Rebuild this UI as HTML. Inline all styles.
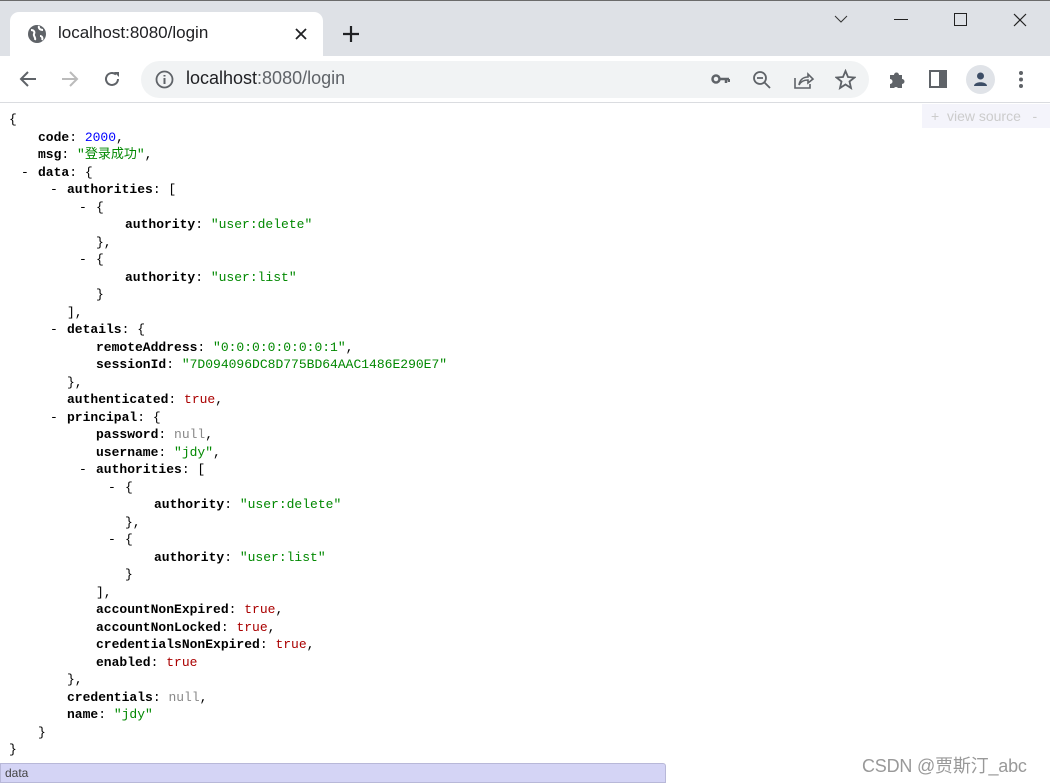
<!DOCTYPE html>
<html><head><meta charset="utf-8"><style>
*{margin:0;padding:0;box-sizing:border-box}
body{width:1050px;height:783px;overflow:hidden;background:#fff;font-family:"Liberation Sans","Noto Sans CJK SC",sans-serif;position:relative}
.top{position:absolute;left:0;top:0;width:1050px;height:56px;background:#dee1e6;border-top:1px solid #6b6b6b}
.tab{position:absolute;left:10px;top:12px;width:313px;height:45px;background:#fff;border-radius:9px 9px 0 0}
.tab .t{position:absolute;left:48px;top:11px;font-size:17px;color:#202124}
.tb{position:absolute;left:0;top:56px;width:1050px;height:47px;background:#fff;border-bottom:1px solid #dadce0}
.omni{position:absolute;left:141px;top:61px;width:728px;height:37px;background:#f1f3f4;border-radius:19px}
.omni .u{position:absolute;left:45px;top:7px;font-size:18px;color:#202124}
.omni .u span{color:#5f6368}
.ic{position:absolute}
.json{position:absolute;left:0;top:111px;width:900px;font-family:"Liberation Mono","Noto Sans CJK SC",monospace;font-size:13px;line-height:17.5px;color:#000}
.json div{height:17.5px;position:relative;white-space:nowrap}
.json i{font-style:normal;position:absolute;margin-left:-17px}
b{font-weight:bold;color:#000}
.n{color:#00f}.s{color:#080}.k{color:#a00}.z{color:#888}
.vs{position:absolute;left:922px;top:104px;width:128px;height:24px;background:#f4f4fb;color:#ccc;font-size:14px;padding:4px 0 0 9px}
.sb{position:absolute;left:0;top:763px;width:666px;height:20px;background:#d4d4f5;border:1px solid #b8b8d8;border-radius:0 3px 0 0;font-size:12px;color:#444;padding:2px 4px}
.wm{position:absolute;left:862px;top:752px;font-size:18px;color:#999;letter-spacing:-0.2px}
</style></head><body>
<div class="top"></div>
<div class="tab">
<svg class="ic" style="left:17px;top:12px" width="20" height="20" viewBox="0 0 20 20"><circle cx="10" cy="10" r="9" fill="#5f6368"/><path d="M4 6c3 0 4 2 3 4s2 3 1 6M12 2c-1 3 2 4 4 4M13 12c2 0 3 2 2 4" stroke="#fff" stroke-width="2" fill="none"/></svg>
<div class="t">localhost:8080/login</div>
<svg class="ic" style="left:285px;top:16px" width="12" height="12"><path d="M1 1L11 11M11 1L1 11" stroke="#202124" stroke-width="1.8"/></svg>
</div>
<svg class="ic" style="left:342px;top:25px" width="18" height="18"><path d="M9 1V17M1 9H17" stroke="#202124" stroke-width="2.2"/></svg>
<svg class="ic" style="left:834px;top:14px" width="14" height="10"><path d="M1 2L7 8L13 2" stroke="#333" fill="none"/></svg>
<div style="position:absolute;left:894px;top:19px;width:14px;height:1px;background:#222"></div>
<div style="position:absolute;left:954px;top:13px;width:13px;height:13px;border:1px solid #222"></div>
<svg class="ic" style="left:1013px;top:13px" width="14" height="14"><path d="M1 1L13 13M13 1L1 13" stroke="#222" stroke-width="1.2"/></svg>
<div class="tb"></div>
<svg class="ic" style="left:19px;top:70px" width="18" height="18"><path d="M17 9H2M9 2L2 9L9 16" stroke="#5f6368" stroke-width="2" fill="none"/></svg>
<svg class="ic" style="left:61px;top:70px" width="18" height="18"><path d="M1 9H16M9 2L16 9L9 16" stroke="#bbb" stroke-width="2" fill="none"/></svg>
<svg class="ic" style="left:103px;top:70px" width="18" height="18"><path d="M15 9A6 6 0 1 1 13 4.5" stroke="#5f6368" stroke-width="2" fill="none"/><path d="M11 2H16V7Z" fill="#5f6368"/></svg>
<div class="omni">
<svg class="ic" style="left:14px;top:9px" width="19" height="19"><circle cx="9.5" cy="9.5" r="8" stroke="#5f6368" stroke-width="1.8" fill="none"/><path d="M9.5 8V14M9.5 5V6.5" stroke="#5f6368" stroke-width="2"/></svg>
<div class="u">localhost<span>:8080/login</span></div>
<svg class="ic" style="left:570px;top:11px" width="19" height="14"><circle cx="5" cy="7" r="3.5" stroke="#5f6368" stroke-width="2.5" fill="none"/><path d="M8 7H18M15 7V11M18 7V10" stroke="#5f6368" stroke-width="2.5"/></svg>
<svg class="ic" style="left:611px;top:9px" width="20" height="20"><circle cx="8" cy="8" r="6" stroke="#5f6368" stroke-width="1.8" fill="none"/><path d="M12.5 12.5L18 18M5 8H11" stroke="#5f6368" stroke-width="1.8"/></svg>
<svg class="ic" style="left:652px;top:8px" width="22" height="21"><path d="M2 9V19H17V15" stroke="#5f6368" stroke-width="1.6" fill="none"/><path d="M6 16C7 10 11 8 15 8V5L20 10L15 14V11C11 11 8 12 6 16Z" stroke="#5f6368" stroke-width="1.6" fill="none"/></svg>
<svg class="ic" style="left:694px;top:8px" width="21" height="21"><path d="M10.5 2L13 8L19.5 8.5L14.5 12.5L16 19L10.5 15.5L5 19L6.5 12.5L1.5 8.5L8 8Z" stroke="#5f6368" stroke-width="1.8" fill="none"/></svg>
</div>
<svg class="ic" style="left:887px;top:69px" width="20" height="20"><path d="M3 6H7A2.5 2.5 0 0 1 12 6H15V10A2.5 2.5 0 0 1 15 15V19H11A2.5 2.5 0 0 0 7 19H3V15A2.5 2.5 0 0 0 3 10Z" fill="#5f6368"/></svg>
<div style="position:absolute;left:929px;top:70px;width:18px;height:18px;border:2.5px solid #5f6368;border-right:8px solid #5f6368"></div>
<div style="position:absolute;left:966px;top:65px;width:29px;height:29px;border-radius:50%;background:#e0e3e8"></div>
<svg class="ic" style="left:971px;top:70px" width="19" height="19"><circle cx="9.5" cy="6" r="3.5" fill="#3c4d66"/><path d="M3 16C3 11 16 11 16 16Z" fill="#3c4d66"/></svg>
<svg class="ic" style="left:1018px;top:70px" width="6" height="19"><circle cx="3" cy="3" r="2" fill="#5f6368"/><circle cx="3" cy="9.5" r="2" fill="#5f6368"/><circle cx="3" cy="16" r="2" fill="#5f6368"/></svg>
<div class="vs">+&nbsp;&nbsp;view source&nbsp;&nbsp;&nbsp;-</div>
<div class="json">
<div style="padding-left:9px">{</div>
<div style="padding-left:38px"><b>code</b>: <span class="n">2000</span>,</div>
<div style="padding-left:38px"><b>msg</b>: <span class="s">"登录成功"</span>,</div>
<div style="padding-left:38px"><i>-</i><b>data</b>: {</div>
<div style="padding-left:67px"><i>-</i><b>authorities</b>: [</div>
<div style="padding-left:96px"><i>-</i>{</div>
<div style="padding-left:125px"><b>authority</b>: <span class="s">"user:delete"</span></div>
<div style="padding-left:96px">},</div>
<div style="padding-left:96px"><i>-</i>{</div>
<div style="padding-left:125px"><b>authority</b>: <span class="s">"user:list"</span></div>
<div style="padding-left:96px">}</div>
<div style="padding-left:67px">],</div>
<div style="padding-left:67px"><i>-</i><b>details</b>: {</div>
<div style="padding-left:96px"><b>remoteAddress</b>: <span class="s">"0:0:0:0:0:0:0:1"</span>,</div>
<div style="padding-left:96px"><b>sessionId</b>: <span class="s">"7D094096DC8D775BD64AAC1486E290E7"</span></div>
<div style="padding-left:67px">},</div>
<div style="padding-left:67px"><b>authenticated</b>: <span class="k">true</span>,</div>
<div style="padding-left:67px"><i>-</i><b>principal</b>: {</div>
<div style="padding-left:96px"><b>password</b>: <span class="z">null</span>,</div>
<div style="padding-left:96px"><b>username</b>: <span class="s">"jdy"</span>,</div>
<div style="padding-left:96px"><i>-</i><b>authorities</b>: [</div>
<div style="padding-left:125px"><i>-</i>{</div>
<div style="padding-left:154px"><b>authority</b>: <span class="s">"user:delete"</span></div>
<div style="padding-left:125px">},</div>
<div style="padding-left:125px"><i>-</i>{</div>
<div style="padding-left:154px"><b>authority</b>: <span class="s">"user:list"</span></div>
<div style="padding-left:125px">}</div>
<div style="padding-left:96px">],</div>
<div style="padding-left:96px"><b>accountNonExpired</b>: <span class="k">true</span>,</div>
<div style="padding-left:96px"><b>accountNonLocked</b>: <span class="k">true</span>,</div>
<div style="padding-left:96px"><b>credentialsNonExpired</b>: <span class="k">true</span>,</div>
<div style="padding-left:96px"><b>enabled</b>: <span class="k">true</span></div>
<div style="padding-left:67px">},</div>
<div style="padding-left:67px"><b>credentials</b>: <span class="z">null</span>,</div>
<div style="padding-left:67px"><b>name</b>: <span class="s">"jdy"</span></div>
<div style="padding-left:38px">}</div>
<div style="padding-left:9px">}</div>
</div>
<div class="sb">data</div>
<div class="wm">CSDN @贾斯汀_abc</div>
</body></html>
